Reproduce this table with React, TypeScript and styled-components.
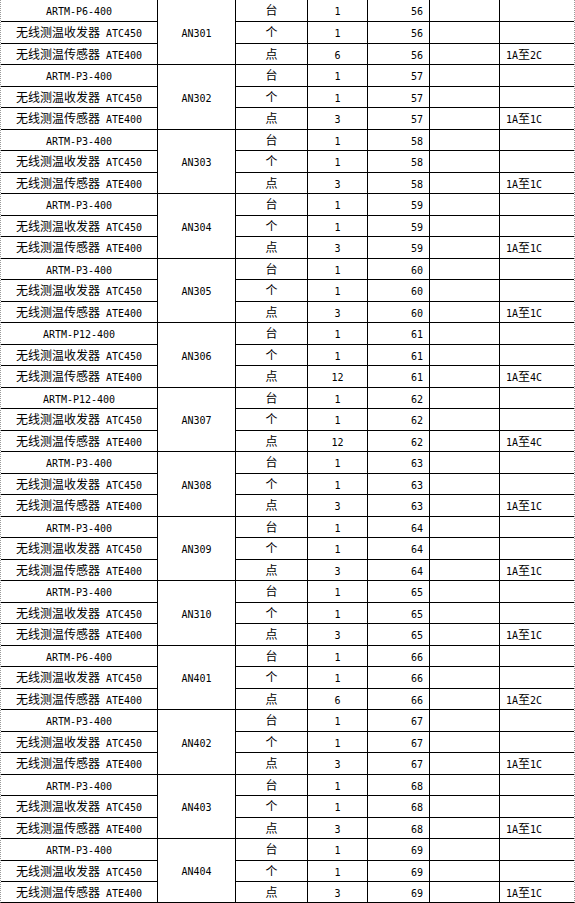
import React from "react";
import styled, { createGlobalStyle } from "styled-components";

const Global = createGlobalStyle`
  html, body { margin: 0; padding: 0; background: #fff; }
  body { font-family: "Noto Sans CJK SC", sans-serif; }
`;

const Sheet = styled.div`
  display: grid;
  width: 575px;
  box-sizing: border-box;
  grid-template-columns: 156px 77px 71px 59px 61px 69px 74px;
  grid-template-rows: 21px repeat(20, 21px 20px) 20px;
  gap: 1px;
  background: #000;
  background-clip: padding-box;
  border-left: 1px dotted #9a9a9a;
  border-right: 1px dotted #9a9a9a;
  border-bottom: 1px solid #000;
`;

const Cell = styled.div<{ $align?: "left" | "center" | "right"; $span?: number }>`
  background: #fff;
  display: flex;
  align-items: center;
  justify-content: ${(p) =>
    p.$align === "left" ? "flex-start" : p.$align === "right" ? "flex-end" : "center"};
  padding: ${(p) => (p.$align === "left" ? "0 0 0 6px" : p.$align === "right" ? "0 6px 0 0" : "0")};
  grid-row: ${(p) => (p.$span ? `span ${p.$span}` : "auto")};
  font-family: "Noto Sans CJK SC", sans-serif;
  font-size: 12px;
  line-height: 1;
  color: #000;
  white-space: pre;
  overflow: hidden;
`;

const Line = styled.span`
  display: inline-block;
  white-space: pre;
  line-height: 14px;
  height: 14px;
  margin-top: -1px;
`;

const Latin = styled.span`
  font-family: "DejaVu Sans Mono", monospace;
  font-size: 10px;
  line-height: 14px;
`;

const Han = styled.span`
  font-family: "Noto Sans CJK SC", sans-serif;
  font-size: 12px;
  line-height: 14px;
`;

function Txt({ children }: { children: string }) {
  const parts = children.match(/[\x00-\x7f]+|[^\x00-\x7f]+/g) || [];
  return (
    <Line>
      {parts.map((p, i) =>
        /^[\x00-\x7f]+$/.test(p) ? <Latin key={i}>{p}</Latin> : <Han key={i}>{p}</Han>
      )}
    </Line>
  );
}

type Group = { an: string; model: string; pts: number; no: number; note: string };

const groups: Group[] = [
  { an: "AN301", model: "ARTM-P6-400", pts: 6, no: 56, note: "1A至2C" },
  { an: "AN302", model: "ARTM-P3-400", pts: 3, no: 57, note: "1A至1C" },
  { an: "AN303", model: "ARTM-P3-400", pts: 3, no: 58, note: "1A至1C" },
  { an: "AN304", model: "ARTM-P3-400", pts: 3, no: 59, note: "1A至1C" },
  { an: "AN305", model: "ARTM-P3-400", pts: 3, no: 60, note: "1A至1C" },
  { an: "AN306", model: "ARTM-P12-400", pts: 12, no: 61, note: "1A至4C" },
  { an: "AN307", model: "ARTM-P12-400", pts: 12, no: 62, note: "1A至4C" },
  { an: "AN308", model: "ARTM-P3-400", pts: 3, no: 63, note: "1A至1C" },
  { an: "AN309", model: "ARTM-P3-400", pts: 3, no: 64, note: "1A至1C" },
  { an: "AN310", model: "ARTM-P3-400", pts: 3, no: 65, note: "1A至1C" },
  { an: "AN401", model: "ARTM-P6-400", pts: 6, no: 66, note: "1A至2C" },
  { an: "AN402", model: "ARTM-P3-400", pts: 3, no: 67, note: "1A至1C" },
  { an: "AN403", model: "ARTM-P3-400", pts: 3, no: 68, note: "1A至1C" },
  { an: "AN404", model: "ARTM-P3-400", pts: 3, no: 69, note: "1A至1C" },
];

function GroupRows({ g }: { g: Group }) {
  const rows = [
    { name: g.model, unit: "台", qty: "1", note: "" },
    { name: "无线测温收发器 ATC450", unit: "个", qty: "1", note: "" },
    { name: "无线测温传感器 ATE400", unit: "点", qty: String(g.pts), note: g.note },
  ];
  return (
    <>
      {rows.map((r, i) => (
        <React.Fragment key={i}>
          <Cell>
            <Txt>{r.name}</Txt>
          </Cell>
          {i === 0 && (
            <Cell $span={3}>
              <Txt>{g.an}</Txt>
            </Cell>
          )}
          <Cell>
            <Txt>{r.unit}</Txt>
          </Cell>
          <Cell>
            <Txt>{r.qty}</Txt>
          </Cell>
          <Cell $align="right">
            <Txt>{String(g.no)}</Txt>
          </Cell>
          <Cell />
          <Cell $align="left">
            <Txt>{r.note}</Txt>
          </Cell>
        </React.Fragment>
      ))}
    </>
  );
}

export default function App() {
  return (
    <>
      <Global />
      <Sheet>
        {groups.map((g) => (
          <GroupRows key={g.an} g={g} />
        ))}
      </Sheet>
    </>
  );
}
